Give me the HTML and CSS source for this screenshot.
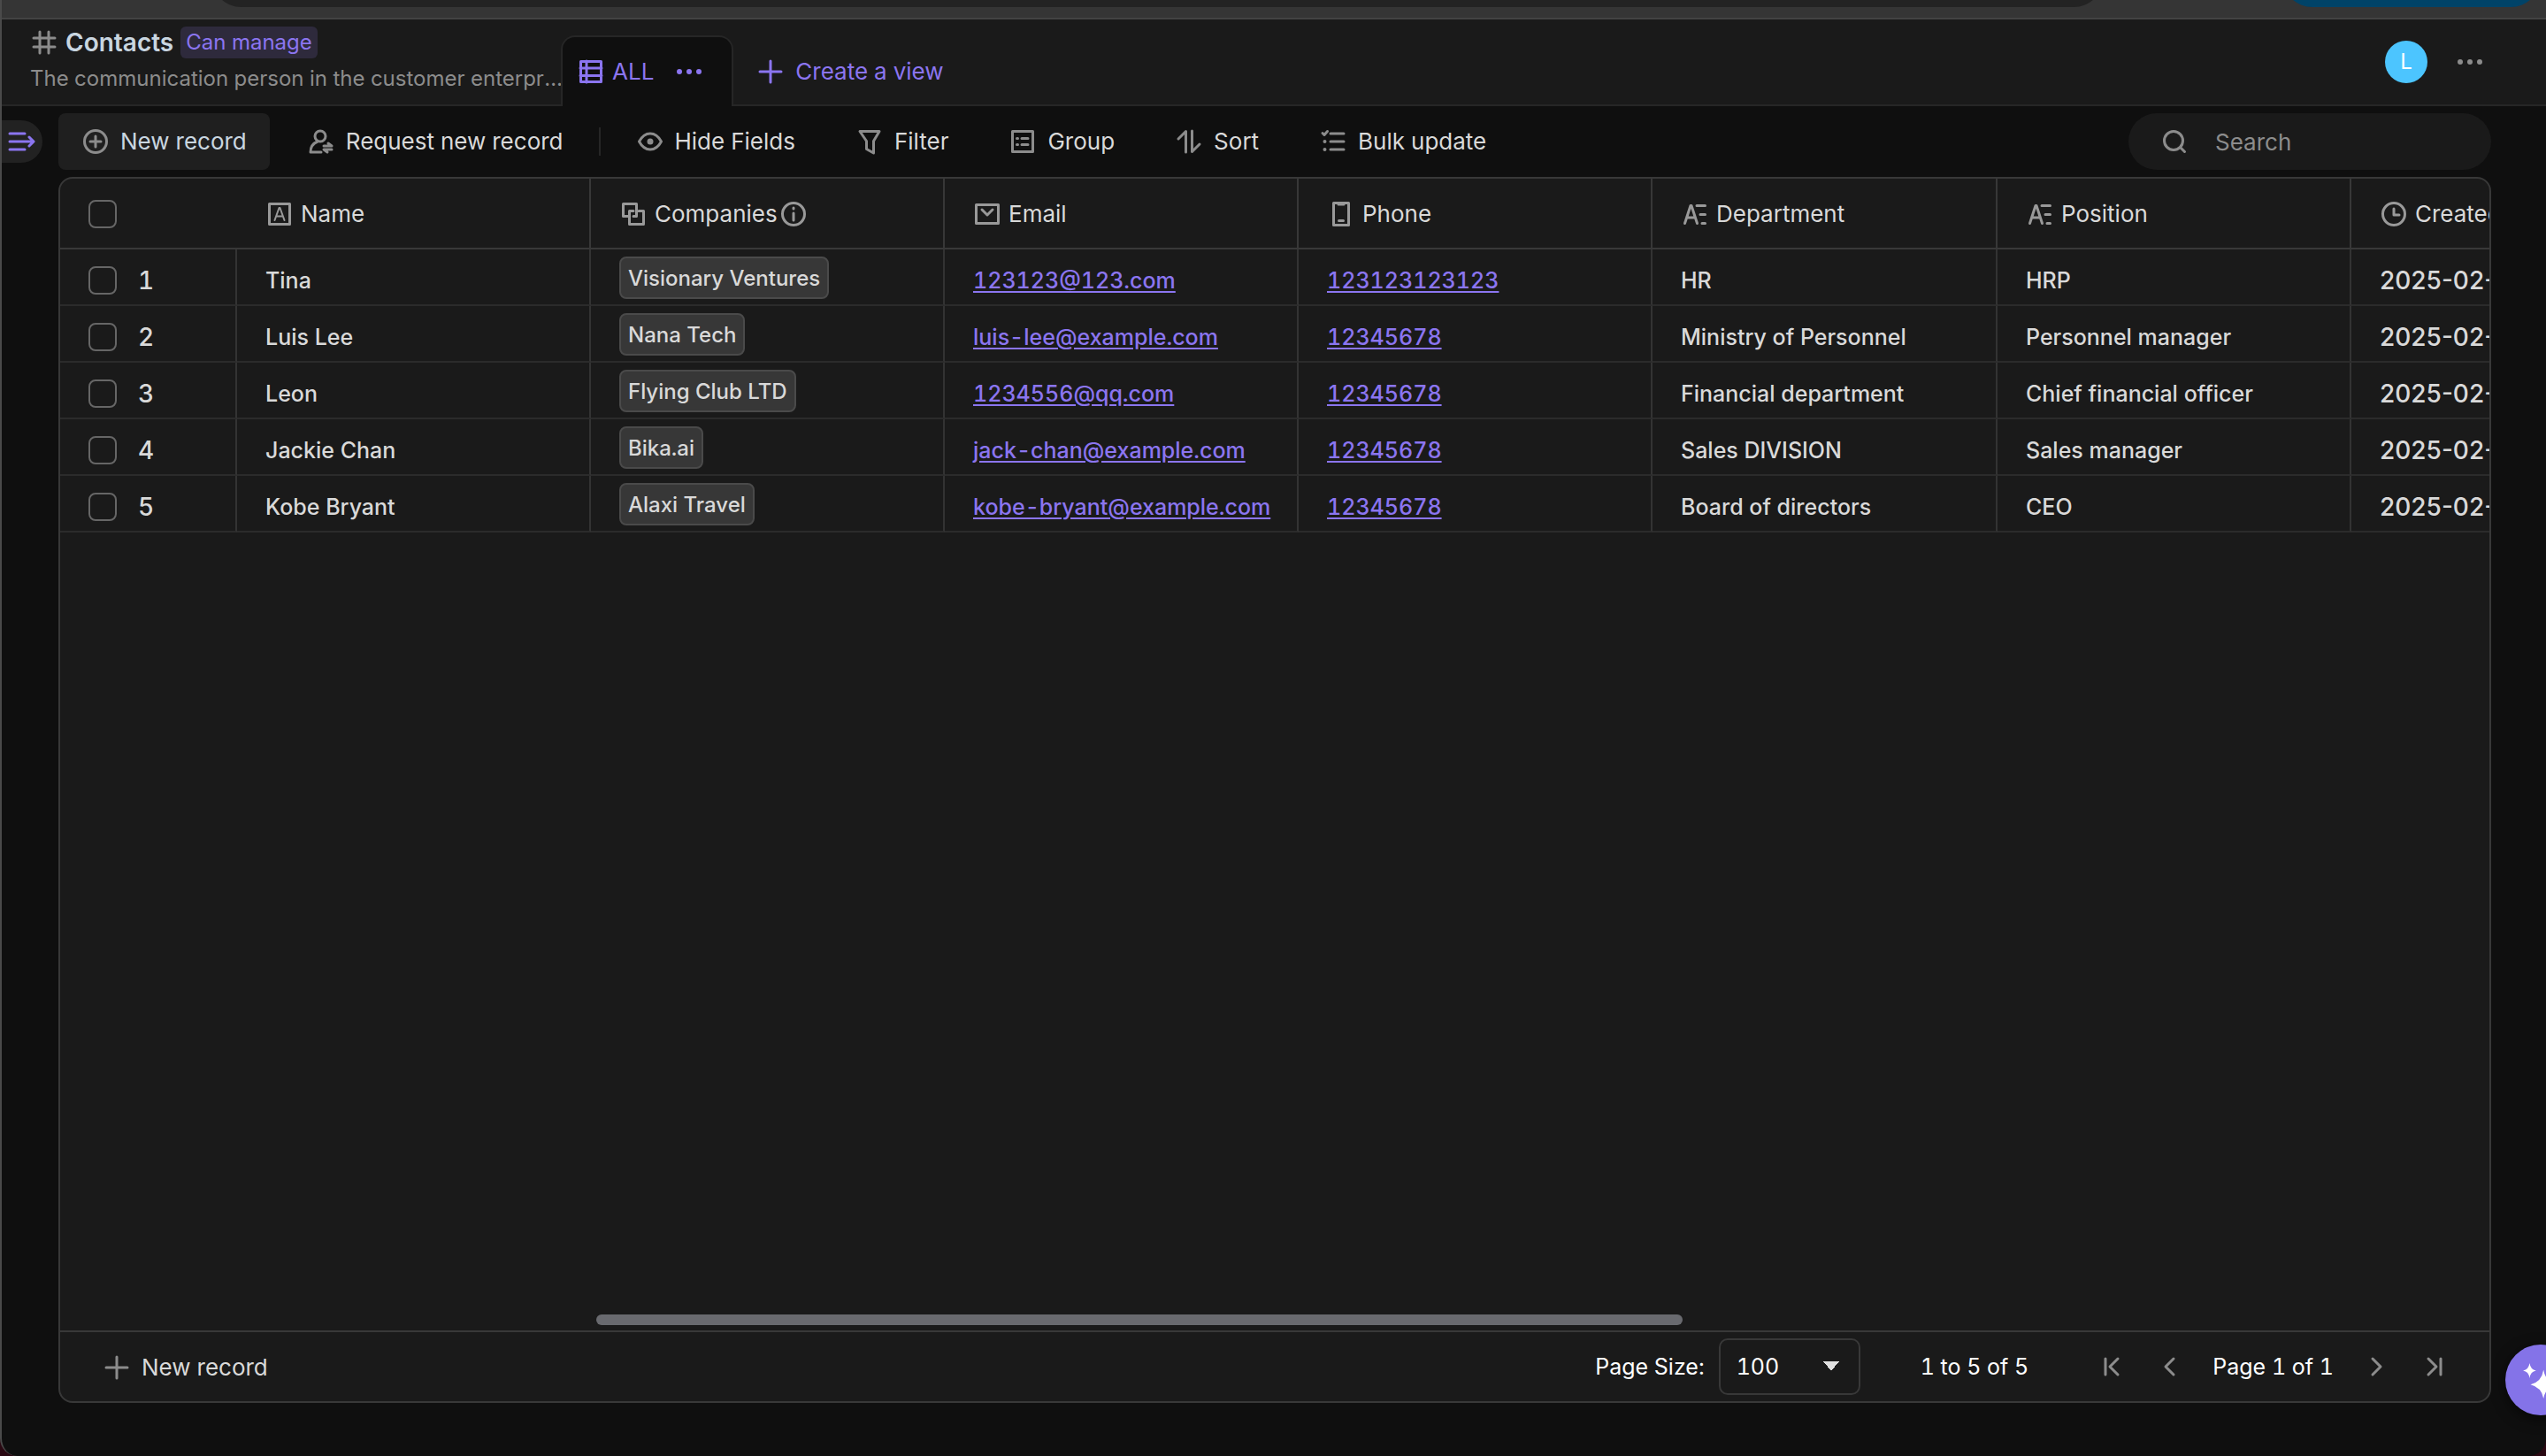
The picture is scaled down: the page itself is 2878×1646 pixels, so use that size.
FILE: index.html
```html
<!DOCTYPE html>
<html lang="en">
<head>
    <meta charset="UTF-8">
    <meta name="viewport" content="width=device-width, initial-scale=1.0">

    <title>Contacts</title>
    <link rel="stylesheet" href="styles.css">
</head>
<body>

    <!-- Shared icons -->
    <svg class="sprite" aria-hidden="true">
        <symbol id="icon-plus" viewBox="0 0 32 32">
            <path d="M16 4v24M4 16h24"/>
        </symbol>
        <symbol id="icon-text" viewBox="0 0 32 32">
            <path d="M4.5 26.5l6.5-20h1l6.500 20M7 20h9M18 6.500h9.500M22 16.500h5.500M24 26.500h3.500"/>
        </symbol>
        <symbol id="icon-dots" viewBox="0 0 32 32">
            <circle class="fill" cx="5" cy="16" r="3"/>
            <circle class="fill" cx="16" cy="16" r="3"/>
            <circle class="fill" cx="27" cy="16" r="3"/>
        </symbol>
    </svg>

    <div class="window">
        <div class="browser-bar">
            <div class="address"></div>
            <div class="update"></div>
        </div>

        <header class="header">
            <div class="title-block">
                <div class="title-row">
                    <svg class="icon grey" viewBox="0 0 32 32"><path d="M11 4v24M21 4v24M4 11h24M4 21h24"/></svg>
                    <h1 class="title">Contacts</h1>
                    <span class="role">Can manage</span>
                </div>
                <p class="description">The communication person in the customer enterprise</p>
            </div>
            <nav class="tabs">
                <div class="tab">
                    <a href="#" class="tab-link">
                        <svg class="icon" viewBox="0 0 32 32"><path d="M4.5 4.5h23v23h-23zM11 4v24M4 12h24M4 20.5h24"/></svg>
                        ALL
                    </a>
                    <button class="icon-button" aria-label="View options"><svg class="icon"><use href="#icon-dots"/></svg></button>
                </div>
                <button class="create-view">
                    <svg class="icon"><use href="#icon-plus"/></svg>
                    Create a view
                </button>
            </nav>
            <div class="header-right">
                <span class="avatar">L</span>
                <button class="icon-button grey" aria-label="More"><svg class="icon"><use href="#icon-dots"/></svg></button>
            </div>
        </header>

        <main class="main">
            <button class="sidebar-toggle" aria-label="Open sidebar">
                <svg class="icon" viewBox="0 0 32 32"><path d="M3 7h17M3 16h26M3 25h17M25 11l5 5-5 5"/></svg>
            </button>

            <div class="toolbar">
                <button class="tool tool-active">
                    <svg class="icon" viewBox="0 0 32 32"><circle cx="16" cy="16" r="12.5"/><path d="M16 10v12M10 16h12"/></svg>
                    New record
                </button>
                <button class="tool">
                    <svg class="icon" viewBox="0 0 32 32"><circle cx="15" cy="10" r="6"/><path d="M16 28H4c0-6 3-10 8-12M19 21h9l-4-3M28 25h-9l4 3"/></svg>
                    Request new record
                </button>
                <span class="divider"></span>
                <button class="tool">
                    <svg class="icon" viewBox="0 0 32 32"><path d="M3.5 16C7 9.500 11 7 16 7s9 2.500 12.500 9C25 22.500 21 25 16 25S7 22.500 3.500 16z"/><circle class="fill" cx="16" cy="16" r="3.5"/></svg>
                    Hide Fields
                </button>
                <button class="tool">
                    <svg class="icon" viewBox="0 0 32 32"><path d="M5 4.5h22l-6.500 11V29l-8-4.500v-9z"/></svg>
                    Filter
                </button>
                <button class="tool">
                    <svg class="icon" viewBox="0 0 32 32"><path d="M4.5 4.5h23v23h-23zM15 12.5h7M15 19.5h7M9.500 12.500h1M9.500 19.500h1"/></svg>
                    Group
                </button>
                <button class="tool">
                    <svg class="icon" viewBox="0 0 32 32"><path d="M4 13l8.500-8.500V28M28 19l-8.500 8.500V4"/></svg>
                    Sort
                </button>
                <button class="tool">
                    <svg class="icon" viewBox="0 0 32 32"><path d="M13 7h15M13 16h15M13 25h15M4 6.500l2 2 3.500-4"/><circle class="fill" cx="6.500" cy="16" r="2"/><circle class="fill" cx="6.500" cy="25" r="2"/></svg>
                    Bulk update
                </button>
                <label class="search">
                    <svg class="icon grey" viewBox="0 0 32 32"><circle cx="15" cy="15" r="10.5"/><path d="M23 23l4.500 4.500"/></svg>
                    <input type="text" class="search-input" placeholder="Search" aria-label="Search">
                </label>
            </div>

            <div class="grid">
                <div class="table-wrap">
                    <table class="table">
                        <colgroup>
                            <col class="col-check">
                            <col class="col-data">
                            <col class="col-data">
                            <col class="col-data">
                            <col class="col-data">
                            <col class="col-department">
                            <col class="col-data">
                            <col class="col-data">
                        </colgroup>
                        <thead>
                            <tr>
                                <th class="no-line"><input type="checkbox" class="check" aria-label="Select all"></th>
                                <th><span class="head"><svg class="icon" viewBox="0 0 32 32"><path d="M4.5 4.5h23v23h-23z"/><path class="thin" d="M10.500 23L15.500 9h1l5 14M12.500 18.500h7"/></svg>Name</span></th>
                                <th><span class="head"><svg class="icon" viewBox="0 0 32 32"><path d="M10 18.500H4.500v-14h15v14H16M16 12.500h-4.500v15h16v-15H22"/></svg>Companies<svg class="icon info" viewBox="0 0 32 32"><circle cx="16" cy="16" r="12.5"/><path d="M16 15v8M16 9v1"/></svg></span></th>
                                <th><span class="head"><svg class="icon" viewBox="0 0 32 32"><path d="M3.5 5.500h25v21h-25zM10 11l6 6 6-6"/></svg>Email</span></th>
                                <th><span class="head"><svg class="icon" viewBox="0 0 32 32"><path d="M7.500 3.500h17v25h-17zM13 5h6M13.500 23.500h5"/></svg>Phone</span></th>
                                <th><span class="head"><svg class="icon"><use href="#icon-text"/></svg>Department</span></th>
                                <th><span class="head"><svg class="icon"><use href="#icon-text"/></svg>Position</span></th>
                                <th><span class="head"><svg class="icon" viewBox="0 0 32 32"><circle cx="16" cy="16" r="12.5"/><path d="M16 10v7h6"/></svg>Created time</span></th>
                            </tr>
                        </thead>
                        <tbody>
                            <tr>
                                <td><label class="pick"><input type="checkbox" class="check">1</label></td>
                                <td>Tina</td>
                                <td class="tag-cell"><span class="tag">Visionary Ventures</span></td>
                                <td><a href="mailto:123123@123.com">123123@123.com</a></td>
                                <td><a href="tel:123123123123">123123123123</a></td>
                                <td>HR</td>
                                <td>HRP</td>
                                <td class="date">2025-02-10</td>
                            </tr>
                            <tr>
                                <td><label class="pick"><input type="checkbox" class="check">2</label></td>
                                <td>Luis Lee</td>
                                <td class="tag-cell"><span class="tag">Nana Tech</span></td>
                                <td><a href="mailto:luis-lee@example.com">luis-lee@example.com</a></td>
                                <td><a href="tel:12345678">12345678</a></td>
                                <td>Ministry of Personnel</td>
                                <td>Personnel manager</td>
                                <td class="date">2025-02-10</td>
                            </tr>
                            <tr>
                                <td><label class="pick"><input type="checkbox" class="check">3</label></td>
                                <td>Leon</td>
                                <td class="tag-cell"><span class="tag">Flying Club LTD</span></td>
                                <td><a href="mailto:1234556@qq.com">1234556@qq.com</a></td>
                                <td><a href="tel:12345678">12345678</a></td>
                                <td>Financial department</td>
                                <td>Chief financial officer</td>
                                <td class="date">2025-02-10</td>
                            </tr>
                            <tr>
                                <td><label class="pick"><input type="checkbox" class="check">4</label></td>
                                <td>Jackie Chan</td>
                                <td class="tag-cell"><span class="tag">Bika.ai</span></td>
                                <td><a href="mailto:jack-chan@example.com">jack-chan@example.com</a></td>
                                <td><a href="tel:12345678">12345678</a></td>
                                <td>Sales DIVISION</td>
                                <td>Sales manager</td>
                                <td class="date">2025-02-10</td>
                            </tr>
                            <tr>
                                <td><label class="pick"><input type="checkbox" class="check">5</label></td>
                                <td>Kobe Bryant</td>
                                <td class="tag-cell"><span class="tag">Alaxi Travel</span></td>
                                <td><a href="mailto:kobe-bryant@example.com">kobe-bryant@example.com</a></td>
                                <td><a href="tel:12345678">12345678</a></td>
                                <td>Board of directors</td>
                                <td>CEO</td>
                                <td class="date">2025-02-10</td>
                            </tr>
                        </tbody>
                    </table>
                </div>
                <div class="scroll-track"><div class="scroll-thumb"></div></div>

                <div class="grid-footer">
                    <button class="add-record">
                        <svg class="icon"><use href="#icon-plus"/></svg>
                        New record
                    </button>
                    <div class="paging">
                        <label class="page-label" for="page-size">Page Size:</label>
                        <select class="page-size" id="page-size">
                            <option>100</option>
                            <option>50</option>
                        </select>
                        <span class="summary">1 to 5 of 5</span>
                        <button class="page-button" aria-label="First page"><svg class="icon" viewBox="0 0 32 32"><path d="M7 7v18M21 7l-9 9 9 9"/></svg></button>
                        <button class="page-button" aria-label="Previous page"><svg class="icon" viewBox="0 0 32 32"><path d="M20 7l-9 9 9 9"/></svg></button>
                        <span class="page-number">Page 1 of 1</span>
                        <button class="page-button" aria-label="Next page"><svg class="icon" viewBox="0 0 32 32"><path d="M12 7l9 9-9 9"/></svg></button>
                        <button class="page-button" aria-label="Last page"><svg class="icon" viewBox="0 0 32 32"><path d="M25 7v18M11 7l9 9-9 9"/></svg></button>
                    </div>
                </div>
            </div>
        </main>

        <button class="assistant" aria-label="Assistant">
            <svg class="assistant-icon" viewBox="0 0 40 40"><path d="M9 2q1 7 7 8-6 1-7 8-1-7-7-8 6-1 7-8zM24 9q2 13 14 16-12 3-14 15-2-12-14-15 12-3 14-16z"/></svg>
        </button>
    </div>
</body>
</html>
```
FILE: styles.css
```css
* {
    box-sizing: border-box;
}
body {
    margin: 0;
    background-color: #2a0812;
    color: #d9d9d9;
    font-family: Inter, sans-serif;
    font-size: 26px;
    font-variant-numeric: tabular-nums;
    line-height: 32px;
}
button {
    padding: 0;
    border: none;
    background: none;
    color: inherit;
    font: inherit;
    cursor: pointer;
}
.sprite {
    display: none;
}
.icon {
    display: block;
    flex-shrink: 0;
    width: 32px;
    height: 32px;
}
svg {
    fill: none;
    stroke: currentColor;
    stroke-width: 3;
    stroke-linecap: round;
    stroke-linejoin: round;
}
.fill {
    fill: currentColor;
    stroke: none;
}
.thin {
    stroke-width: 2;
}
.grey {
    color: #8c8c8c;
}
.window {
    position: relative;
    display: flex;
    flex-direction: column;
    height: 100vh;
    overflow: hidden;
    background-color: #0f0f0f;
    border-left: 2px solid #4a4a4a;
    border-radius: 0 0 20px 20px;
}

/* Bottom edge of the browser chrome */
.browser-bar {
    display: flex;
    flex-shrink: 0;
    height: 22px;
    padding: 0 6px 12px 237px;
    overflow: hidden;
    background-color: #353535;
    border-bottom: 2px solid #434343;
}
.address,
.update {
    height: 68px;
    margin-top: -60px;
    border-radius: 34px;
}
.address {
    flex: 1;
    margin-right: 202px;
    background-color: #232323;
}
.update {
    width: 292px;
    background-color: #004368;
}

.header {
    display: flex;
    flex-shrink: 0;
    height: 98px;
    padding-left: 32px;
    background-color: #1a1a1a;
    border-bottom: 2px solid #262626;
}
.title-block {
    width: 600px;
    padding-top: 8px;
}
.title-row {
    display: flex;
    align-items: center;
    height: 36px;
}
.title {
    margin: 0 8px 0 8px;
    color: #c9d6e0;
    font-size: 28px;
    font-weight: 600;
}
.role {
    padding: 2px 6px;
    background-color: #2e2a3c;
    border-radius: 6px;
    color: #8b75f0;
    font-size: 24px;
}
.description {
    margin: 7px -4px 0 0;
    overflow: hidden;
    color: #8c8c8c;
    font-size: 24px;
    text-overflow: ellipsis;
    white-space: nowrap;
}
.tabs {
    display: flex;
    align-items: flex-end;
    color: #8b75f0;
}
.tab {
    display: flex;
    align-items: center;
    gap: 24px;
    height: 80px;
    margin-bottom: -2px;
    padding: 0 32px 0 16px;
    background-color: #0f0f0f;
    border: 2px solid #262626;
    border-bottom: none;
    border-radius: 16px 16px 0 0;
}
.tab-link {
    display: flex;
    align-items: center;
    gap: 8px;
    color: inherit;
    text-decoration: none;
}
.create-view {
    display: flex;
    align-items: center;
    gap: 12px;
    height: 74px;
    padding-left: 26px;
}
.header-right {
    display: flex;
    align-items: center;
    gap: 32px;
    margin-left: auto;
    padding-right: 70px;
}
.avatar {
    width: 48px;
    height: 48px;
    background-color: #4cc5ff;
    border-radius: 50%;
    color: #ffffff;
    font-size: 24px;
    line-height: 48px;
    text-align: center;
}

.main {
    display: flex;
    flex: 1;
    flex-direction: column;
    min-height: 0;
    padding: 8px 62px 60px 64px;
}
.sidebar-toggle {
    position: absolute;
    top: 136px;
    left: 0;
    width: 46px;
    height: 48px;
    padding-left: 6px;
    background-color: #222222;
    border-radius: 0 24px 24px 0;
    color: #8b75f0;
}
.toolbar {
    display: flex;
    align-items: center;
    gap: 16px;
    height: 64px;
    margin-bottom: 8px;
}
.tool {
    display: flex;
    align-items: center;
    gap: 12px;
    height: 64px;
    padding: 0 26px;
    border-radius: 8px;
    line-height: 34px;
    white-space: nowrap;
}
.tool .icon {
    color: #8c8c8c;
}
.tool-active {
    background-color: #1f1f1f;
    color: #c9d6e0;
}
.divider {
    width: 2px;
    height: 32px;
    margin: 0 -2px;
    background-color: #262626;
}
.search {
    display: flex;
    align-items: center;
    gap: 30px;
    width: 410px;
    height: 64px;
    margin-left: auto;
    padding: 0 36px;
    background-color: #1a1a1a;
    border-radius: 32px;
}
.search-input {
    flex: 1;
    min-width: 0;
    padding: 2px 0 0;
    background: none;
    border: none;
    outline: none;
    color: #d9d9d9;
    font: inherit;
}
.search-input::placeholder {
    color: #8c8c8c;
}

/* Records */
.grid {
    display: flex;
    flex: 1;
    flex-direction: column;
    min-height: 0;
    overflow: hidden;
    background-color: #1a1a1a;
    border: 2px solid #383838;
    border-radius: 16px;
}
.table-wrap {
    flex: 1;
    overflow: hidden;
}
.table {
    width: 2990px;
    border-spacing: 0;
    table-layout: fixed;
}
.col-check {
    width: 200px;
}
.col-data {
    width: 400px;
}
.col-department {
    width: 390px;
}
th,
td {
    border-right: 2px solid #333333;
    border-bottom: 2px solid #2b2b2b;
    text-align: left;
    white-space: nowrap;
}
th {
    height: 80px;
    padding: 2px 32px 0;
    border-color: #383838;
    font-weight: 400;
}
td {
    height: 64px;
    padding: 7px 32px 0;
    font-size: 25px;
    font-weight: 500;
}
.no-line {
    border-right: none;
}
.head {
    display: flex;
    align-items: center;
    gap: 8px;
}
.head .icon {
    color: #999999;
}
.head .info {
    margin-left: -6px;
}
.check {
    display: block;
    width: 32px;
    height: 32px;
    margin: 0;
    appearance: none;
    border: 2px solid #666666;
    border-radius: 8px;
}
.pick {
    display: flex;
    align-items: center;
    gap: 24px;
    font-size: 28px;
}
td a {
    color: #8b75f0;
    text-underline-offset: 3px;
}
.tag-cell {
    padding-top: 2px;
}
.tag {
    display: block;
    width: fit-content;
    height: 48px;
    padding: 0 8px;
    background-color: #373737;
    border: 2px solid #4a4a4a;
    border-radius: 8px;
    font-size: 24px;
    line-height: 46px;
}
.date {
    font-size: 28px;
    font-variant-numeric: normal;
}
.scroll-track {
    height: 18px;
    padding-left: 606px;
}
.scroll-thumb {
    width: 57.4%;
    height: 12px;
    background-color: #696a6f;
    border-radius: 6px;
}
.grid-footer {
    display: flex;
    align-items: center;
    justify-content: space-between;
    height: 80px;
    padding: 0 48px;
    border-top: 2px solid #383838;
}
.add-record {
    display: flex;
    align-items: center;
    gap: 12px;
    padding-top: 2px;
}
.add-record .icon {
    color: #8c8c8c;
}
.paging {
    display: flex;
    align-items: center;
    color: #ffffff;
    font-size: 25px;
}
.page-size {
    width: 160px;
    height: 64px;
    margin: 0 68px 0 16px;
    padding: 0 18px;
    appearance: none;
    background: conic-gradient(from -39deg at 50% 100%, #e0e0e0 78deg, transparent 0) no-repeat 116px 24px / 18px 11px;
    border: 2px solid #383838;
    border-radius: 10px;
    color: inherit;
    font: inherit;
    font-variant-numeric: tabular-nums;
}
.summary {
    margin-right: 80px;
}
.page-button {
    color: #8c8c8c;
}
.page-button + .page-button {
    margin-left: 32px;
}
.page-number {
    margin: 0 32px;
}
.assistant {
    position: absolute;
    right: -34px;
    bottom: 46px;
    width: 80px;
    height: 80px;
    padding-left: 18px;
    background-color: #8473e8;
    border-radius: 50%;
    box-shadow: 0 4px 16px rgba(0, 0, 0, 0.6);
}
.assistant-icon {
    display: block;
    width: 42px;
    height: 42px;
    fill: #ffffff;
    stroke: none;
}
```
